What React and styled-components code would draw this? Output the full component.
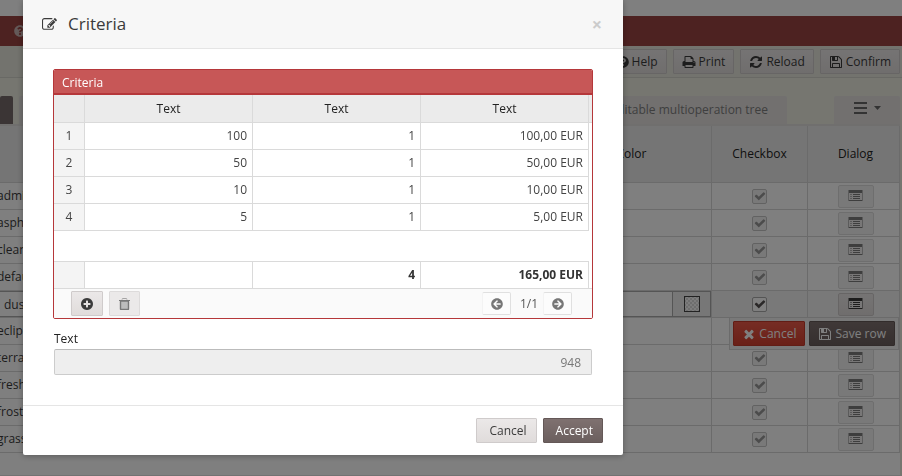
import { useState } from "react";
import styled, { createGlobalStyle, css } from "styled-components";
import { FaArrowCircleLeft, FaArrowCircleRight, FaQuestionCircle } from "react-icons/fa";

const GlobalStyle = createGlobalStyle`
  * {
    box-sizing: border-box;
  }

  body {
    margin: 0;
    background: #ffffff;
    color: #3b3b3b;
    font-family: "Open Sans", "Noto Sans", sans-serif;
    font-size: 12px;
    line-height: 18px;
  }

  button, input {
    font: inherit;
    color: inherit;
  }
`;

/* icons */

const paths = {
  check: "M1671 566q0 40-28 68l-724 724-136 136q-28 28-68 28t-68-28l-136-136-362-362q-28-28-28-68t28-68l136-136q28-28 68-28t68 28l294 295 656-657q28-28 68-28t68 28l136 136q28 28 28 68z",
  times: "M1490 1322q0 40-28 68l-136 136q-28 28-68 28t-68-28l-294-294-294 294q-28 28-68 28t-68-28l-136-136q-28-28-28-68t28-68l294-294-294-294q-28-28-28-68t28-68l136-136q28-28 68-28t68 28l294 294 294-294q28-28 68-28t68 28l136 136q28 28 28 68t-28 68l-294 294 294 294q28 28 28 68z",
  save: "M512 1536h768v-384h-768v384zm896 0h128v-896q0-14-10-38.5t-20-34.5l-281-281q-10-10-34-20t-39-10v416q0 40-28 68t-68 28h-576q-40 0-68-28t-28-68v-416h-128v1280h128v-416q0-40 28-68t68-28h832q40 0 68 28t28 68v416zm-384-928v-320q0-13-9.5-22.5t-22.5-9.5h-192q-13 0-22.5 9.5t-9.5 22.5v320q0 13 9.5 22.5t22.5 9.5h192q13 0 22.5-9.5t9.5-22.5zm640 32v928q0 40-28 68t-68 28h-1344q-40 0-68-28t-28-68v-1344q0-40 28-68t68-28h928q40 0 88 20t76 48l280 280q28 28 48 76t20 88z",
  edit: "M888 1184l116-116-152-152-116 116v56h96v96h56zm440-720q-16-16-33 1l-350 350q-17 17-1 33t33-1l350-350q17-17 1-33zm80 594v190q0 119-84.5 203.5t-203.5 84.5h-832q-119 0-203.5-84.5t-84.5-203.5v-832q0-119 84.5-203.5t203.5-84.5h832q63 0 117 25 15 7 18 23 3 17-9 29l-49 49q-14 14-32 8-23-6-45-6h-832q-66 0-113 47t-47 113v832q0 66 47 113t113 47h832q66 0 113-47t47-113v-126q0-13 9-22l64-64q15-15 35-7t20 29zm-96-738l288 288-672 672h-288v-288zm444 132l-92 92-288-288 92-92q28-28 68-28t68 28l152 152q28 28 28 68t-28 68z",
  plus: "M1344 960v-128q0-26-19-45t-45-19h-256v-256q0-26-19-45t-45-19h-128q-26 0-45 19t-19 45v256h-256q-26 0-45 19t-19 45v128q0 26 19 45t45 19h256v256q0 26 19 45t45 19h128q26 0 45-19t19-45v-256h256q26 0 45-19t19-45zm320-64q0 209-103 385.5t-279.5 279.5-385.5 103-385.5-103-279.5-279.5-103-385.5 103-385.5 279.5-279.5 385.5-103 385.5 103 279.5 279.5 103 385.5z",
  print: "M448 1536h896v-256h-896v256zm0-640h896v-384h-160q-40 0-68-28t-28-68v-160h-640v640zm1152 64q0-26-19-45t-45-19-45 19-19 45 19 45 45 19 45-19 19-45zm128 0v416q0 13-9.5 22.5t-22.5 9.5h-224v160q0 40-28 68t-68 28h-960q-40 0-68-28t-28-68v-160h-224q-13 0-22.5-9.5t-9.5-22.5v-416q0-79 56.5-135.5t135.5-56.5h64v-544q0-40 28-68t68-28h672q40 0 88 20t76 48l152 152q28 28 48 76t20 88v256h64q79 0 135.5 56.5t56.5 135.5z",
  reload: "M1639 1056q0 5-1 7-64 268-268 434.5t-478 166.5q-146 0-282.5-55t-243.5-157l-129 129q-19 19-45 19t-45-19-19-45v-448q0-26 19-45t45-19h448q26 0 45 19t19 45-19 45l-137 137q71 66 161 102t187 36q134 0 250-65t186-179q11-17 53-117 8-23 30-23h192q13 0 22.5 9.5t9.5 22.5zm25-800v448q0 26-19 45t-45 19h-448q-26 0-45-19t-19-45 19-45l138-138q-148-137-349-137-134 0-250 65t-186 179q-11 17-53 117-8 23-30 23h-199q-13 0-22.5-9.5t-9.5-22.5v-7q65-268 270-434.5t480-166.5q146 0 284 55.5t245 156.5l130-129q19-19 45-19t45 19 19 45z"
};

function Icon({ name, size = 14 }) {
  return (
    <svg width={size} height={size} viewBox="0 0 1792 1792" fill="currentColor" aria-hidden="true">
      <path d={paths[name]} />
    </svg>
  );
}

function ListIcon() {
  return (
    <svg width="15" height="11" viewBox="0 0 15 11" shapeRendering="crispEdges" aria-hidden="true">
      <rect x="0" y="0" width="15" height="11" fill="currentColor" opacity="0.5" />
      <rect x="1" y="3" width="13" height="7" fill="#f1efef" />
      <rect x="1" y="0" width="13" height="3" fill="currentColor" />
      <path d="M5 4.5h7M5 6.5h7M5 8.5h7M1 10.5h13" stroke="currentColor" />
      <path d="M2 4.5h2M2 6.5h2M2 8.5h2" stroke="currentColor" opacity="0.5" />
    </svg>
  );
}

function TrashIcon() {
  return (
    <svg width="11" height="12" viewBox="0 0 11 12" fill="none" stroke="currentColor" aria-hidden="true">
      <path d="M3 1.5Q3 .5 4 .5h3q1 0 1 1" opacity="0.6" />
      <path d="M0 2.5h11" />
      <rect x="1.5" y="3" width="8" height="8.5" rx="0.5" fill="#bcbcbc" strokeWidth="1.4" />
    </svg>
  );
}

function MenuIcon() {
  return (
    <svg width="27" height="12" viewBox="0 0 27 12" fill="currentColor" aria-hidden="true">
      <path d="M0 0h13v2H0zM0 5h13v2H0zM0 10h13v2H0zM20 4h7l-3.500 4z" />
    </svg>
  );
}

function SwatchIcon() {
  return (
    <svg width="16" height="16" viewBox="0 0 16 16" aria-hidden="true">
      <defs>
        <pattern id="checker" width="4" height="4" patternUnits="userSpaceOnUse">
          <rect width="4" height="4" fill="#fbfbfb" />
          <path d="M0 0h2v2H0zM2 2h2v2H2z" fill="#dcdcdc" />
        </pattern>
      </defs>
      <rect x="0.5" y="0.5" width="15" height="15" fill="url(#checker)" stroke="#444444" />
    </svg>
  );
}

/* buttons */

const buttonVariants = {
  default: css`
    background: linear-gradient(#ebe8e8, #e0dcdb);
    border-color: #cfcbcb;
    color: #3b3b3b;
  `,
  primary: css`
    background: linear-gradient(#7f7170, #6b5f5e);
    border-color: #645857;
    color: #ffffff;
  `,
  danger: css`
    background: linear-gradient(#ed5a49, #d4402f);
    border-color: #c43a2a;
    color: #ffffff;
  `
};

const Button = styled.button`
  display: inline-flex;
  align-items: center;
  justify-content: center;
  gap: 3px;
  height: 25px;
  padding: ${({ $wide }) => ($wide ? "0 9px 0 12px" : "0 8px")};
  border: 1px solid;
  border-radius: 1px;
  white-space: nowrap;
  ${({ $variant = "default" }) => buttonVariants[$variant]}
`;

const IconButton = styled(Button)`
  width: 32px;
  padding: 0;

  &:disabled {
    width: 31px;
    background: #ebe9e9;
    border-color: #dddbdb;
    color: #777777;
  }
`;

const DialogButton = styled(Button)`
  width: 36px;
  height: 23px;
  padding: 0 0 2px;
  border-radius: 2px;

  &:disabled {
    background: #f3f2f2;
    border-color: #dddddd;
    color: #7c7c7c;
  }
`;

const PagerButton = styled.button`
  display: flex;
  align-items: center;
  justify-content: center;
  width: 29px;
  height: 23px;
  padding: 0;
  border: 1px solid #e0e0e0;
  border-left-color: #f3f3f3;
  border-radius: 2px;
  background: #fcfcfc;
  color: #777777;
`;

/* page behind the dialog */

const TopStrip = styled.div`
  height: 16px;
`;

const BrandBar = styled.div`
  display: flex;
  align-items: center;
  height: 30px;
  padding-left: 14px;
  background: #9b4442;
  color: #c9b3b2;
`;

const Toolbar = styled.div`
  display: flex;
  justify-content: flex-end;
  gap: 6px;
  height: 32px;
  padding: 3px 2px 0;
  background: #e6e7dc;
  border-bottom: 1px solid #d2d3ca;
`;

const Content = styled.div`
  padding: 18px 2px 0 0;
  background: #ecede1;
`;

const TabBar = styled.div`
  display: flex;
  height: 30px;
  border-bottom: 2px solid #e0dfdc;
`;

const Tab = styled.button`
  height: 28px;
  padding: 0 19px;
  border: 0;
  border-radius: 2px 2px 0 0;
  background: ${({ $active }) => ($active ? "#776b6a" : "#e4e1df")};
  color: #7e7e7e;
`;

const ActiveTab = styled(Tab)`
  width: 13px;
  padding: 0;
  margin-right: 6px;
`;

const LastTab = styled(Tab)`
  flex: 1;
  margin-right: 47px;
  text-align: right;
`;

const MenuButton = styled(Tab)`
  width: 66px;
  color: #666666;
`;

const PageTable = styled.table`
  width: calc(100% + 3px);
  margin-left: -3px;
  table-layout: fixed;
  border-collapse: separate;
  border-spacing: 0;
  background: #ffffff;
`;

const PageTh = styled.th`
  width: ${({ $width }) => ($width ? `${$width}px` : "auto")};
  height: 57px;
  padding: 0;
  background: #ebebeb;
  border-right: 1px solid #d6d6d6;
  border-bottom: 1px solid #d6d6d6;
  font-weight: 500;
  color: #222222;

  &:last-child {
    padding-left: 4px;
  }
`;

const PageTr = styled.tr`
  background: ${({ $editing }) => ($editing ? "#f3f3f3" : "#ffffff")};
`;

const PageTd = styled.td`
  height: 27px;
  padding: 0;
  border-right: 1px solid #d6d6d6;
  border-bottom: 1px solid #d6d6d6;
  vertical-align: middle;

  &:last-child {
    padding-left: 4px;
  }
`;

const CenterCell = styled.div`
  display: flex;
  align-items: center;
  justify-content: center;
  height: 26px;
`;

const CellInput = styled.input`
  display: block;
  width: 100%;
  height: 26px;
  padding: 0 7px;
  border: 1px solid #aaaaaa;
  border-left: 0;
  background: #ffffff;
`;

const ColorCell = styled.div`
  display: flex;
`;

const SwatchButton = styled.button`
  flex: none;
  display: flex;
  align-items: center;
  justify-content: center;
  width: 38px;
  height: 26px;
  padding: 0;
  border: 1px solid #aaaaaa;
  border-left: 0;
  background: #eeeeee;
`;

const CheckWrap = styled.span`
  display: grid;
  place-items: center;
  width: 15px;
  height: 15px;
  color: ${({ $disabled }) => ($disabled ? "#999999" : "#555050")};

  > * {
    grid-area: 1 / 1;
  }

  svg {
    pointer-events: none;
  }
`;

const CheckInput = styled.input`
  appearance: none;
  width: 15px;
  height: 15px;
  margin: 0;
  border: 1px solid #aaaaaa;
  border-radius: 2px;
  background: #ffffff;

  &:disabled {
    border-color: #c4c4c4;
    background: #f3f3f3;
  }
`;

const EditRowAnchor = styled.div`
  position: relative;
`;

const RowActions = styled.div`
  position: absolute;
  top: 1px;
  right: 0;
  display: flex;
  gap: 4px;
  padding: 3px;
  background: #f3f3f3;
  border: 1px solid #d6d6d6;
  border-top: 0;
`;

const PageFooter = styled.div`
  height: 23px;
  background: #ffffff;
  border-bottom: 1px solid #e4e4e4;
`;

/* dialog */

const Backdrop = styled.div`
  position: fixed;
  inset: 0;
  padding: 0 23px;
  background: rgba(0, 0, 0, 0.5);
`;

const Modal = styled.section`
  max-width: 600px;
  background: #ffffff;
  border-radius: 0 0 2px 2px;
  box-shadow: 0 1px 6px rgba(0, 0, 0, 0.3);
`;

const ModalHeader = styled.header`
  display: flex;
  align-items: center;
  gap: 11px;
  height: 49px;
  padding: 0 21px 0 19px;
  background: #f7f7f7;
  border-bottom: 1px solid #e5e5e5;
`;

const ModalTitle = styled.h1`
  flex: 1;
  margin: 0;
  font-size: 17px;
  font-weight: 400;
`;

const CloseButton = styled.button`
  padding: 0;
  border: 0;
  background: none;
  color: #cccccc;
  font-size: 18px;
  font-weight: 700;
  line-height: 18px;
`;

const ModalBody = styled.div`
  padding: 20px 30px 30px;
`;

const ModalFooter = styled.footer`
  display: flex;
  justify-content: flex-end;
  gap: 6px;
  padding: 12px 20px;
  border-top: 1px solid #e5e5e5;
`;

const Panel = styled.div`
  border: 1px solid #b5373a;
  border-radius: 2px;
  overflow: hidden;
`;

const PanelTitle = styled.h2`
  height: 25px;
  margin: 0;
  padding: 4px 8px 0;
  background: #c75757;
  border-bottom: 2px solid #b5373a;
  color: #ffffff;
  font-size: 12px;
  font-weight: 500;
`;

const Grid = styled.table`
  width: 100%;
  table-layout: fixed;
  border-collapse: separate;
  border-spacing: 0;
`;

const Th = styled.th`
  width: ${({ $width }) => ($width ? `${$width}px` : "auto")};
  height: 28px;
  padding: 0;
  background: #ebebeb;
  border-right: ${({ $gutter }) => ($gutter ? "0" : "1px solid #dadada")};
  border-bottom: 1px solid #dadada;
  color: #222222;
  font-weight: 500;
`;

const Td = styled.td`
  height: 27px;
  padding: 0 5px;
  border-right: 1px solid #dadada;
  border-bottom: 1px solid #dadada;
  text-align: right;
  color: #444444;
`;

const RowNumber = styled(Td)`
  background: #f4f4f4;
  text-align: center;
`;

const TotalTd = styled(Td)`
  color: #333333;
  font-weight: 700;
`;

const FillTd = styled.td`
  height: 31px;
  padding: 0;
  border-bottom: 1px solid #dadada;
`;

const GutterTd = styled.td`
  padding: 0;
  border-bottom: ${({ $line }) => ($line ? "1px solid #dadada" : "0")};
`;

const PanelFooter = styled.div`
  display: flex;
  align-items: center;
  justify-content: space-between;
  height: 29px;
  padding: 0 20px 0 17px;
  background: #fafafa;
`;

const ButtonGroup = styled.div`
  display: flex;
  gap: 6px;
`;

const Pager = styled.div`
  display: flex;
  align-items: center;
`;

const PageCount = styled.span`
  width: 32px;
  padding-left: 4px;
  text-align: center;
  color: #555555;
`;

const Field = styled.div`
  margin: 11px 1px 0;
`;

const Label = styled.label`
  display: block;
  height: 19px;
  color: #222222;
  font-weight: 500;
`;

const TextInput = styled.input`
  display: block;
  width: 100%;
  height: 26px;
  padding: 0 10px;
  border: 1px solid #cccccc;
  border-top-color: #bbbbbb;
  border-radius: 2px;
  background: #eeeeee;
  color: #777777;
  text-align: right;
`;

const themes = ["admin", "asphalt", "clean", "default", "dust", "eclipse", "terra", "fresh", "frost", "grass"];

const rows = [
  ["100", "1", "100,00 EUR"],
  ["50", "1", "50,00 EUR"],
  ["10", "1", "10,00 EUR"],
  ["5", "1", "5,00 EUR"]
];

function Checkbox({ label, disabled }) {
  const [checked, setChecked] = useState(true);

  return (
    <CheckWrap $disabled={disabled}>
      <CheckInput
        type="checkbox"
        aria-label={label}
        checked={checked}
        disabled={disabled}
        onChange={(e) => setChecked(e.target.checked)}
      />
      {checked && <Icon name="check" size={12} />}
    </CheckWrap>
  );
}

function ThemeRow({ name, editing }) {
  return (
    <PageTr $editing={editing}>
      <PageTd>{editing ? <CellInput aria-label="Theme" defaultValue={name} /> : name}</PageTd>
      <PageTd>
        {editing && (
          <ColorCell>
            <CellInput aria-label="Color" />
            <SwatchButton type="button" aria-label="Pick color">
              <SwatchIcon />
            </SwatchButton>
          </ColorCell>
        )}
      </PageTd>
      <PageTd>
        <CenterCell>
          <Checkbox label={name} disabled={!editing} />
        </CenterCell>
      </PageTd>
      <PageTd>
        <CenterCell>
          <DialogButton type="button" disabled={!editing} aria-label={`Open ${name}`}>
            <ListIcon />
          </DialogButton>
        </CenterCell>
        {editing && (
          <EditRowAnchor>
            <RowActions>
              <Button type="button" $variant="danger">
                <Icon name="times" />
                Cancel
              </Button>
              <Button type="button" $variant="primary">
                <Icon name="save" />
                Save row
              </Button>
            </RowActions>
          </EditRowAnchor>
        )}
      </PageTd>
    </PageTr>
  );
}

function Page() {
  return (
    <main>
      <TopStrip />
      <BrandBar>
        <FaQuestionCircle size={12} />
      </BrandBar>
      <Toolbar>
        <Button type="button">
          <FaQuestionCircle size={12} />
          Help
        </Button>
        <Button type="button">
          <Icon name="print" />
          Print
        </Button>
        <Button type="button">
          <Icon name="reload" />
          Reload
        </Button>
        <Button type="button">
          <Icon name="save" />
          Confirm
        </Button>
      </Toolbar>
      <Content>
        <TabBar>
          <ActiveTab type="button" $active aria-label="Table" />
          <LastTab type="button">Editable multioperation tree</LastTab>
          <MenuButton type="button" aria-label="Menu">
            <MenuIcon />
          </MenuButton>
        </TabBar>
        <PageTable>
          <thead>
            <tr>
              <PageTh />
              <PageTh $width={160}>Color</PageTh>
              <PageTh $width={96}>Checkbox</PageTh>
              <PageTh $width={92}>Dialog</PageTh>
            </tr>
          </thead>
          <tbody>
            {themes.map((name) => (
              <ThemeRow key={name} name={name} editing={name === "dust"} />
            ))}
          </tbody>
        </PageTable>
        <PageFooter />
      </Content>
    </main>
  );
}

function CriteriaGrid() {
  return (
    <Panel>
      <PanelTitle>Criteria</PanelTitle>
      <Grid>
        <thead>
          <tr>
            <Th $width={31} />
            <Th>Text</Th>
            <Th>Text</Th>
            <Th>Text</Th>
            <Th $width={3} $gutter />
          </tr>
        </thead>
        <tbody>
          {rows.map((row, index) => (
            <tr key={row[0]}>
              <RowNumber>{index + 1}</RowNumber>
              {row.map((value, column) => (
                <Td key={column}>{value}</Td>
              ))}
              <GutterTd />
            </tr>
          ))}
          <tr>
            <FillTd colSpan={4} />
            <GutterTd />
          </tr>
        </tbody>
        <tfoot>
          <tr>
            <RowNumber />
            <TotalTd />
            <TotalTd>4</TotalTd>
            <TotalTd>165,00 EUR</TotalTd>
            <GutterTd $line />
          </tr>
        </tfoot>
      </Grid>
      <PanelFooter>
        <ButtonGroup>
          <IconButton type="button" aria-label="Add">
            <Icon name="plus" />
          </IconButton>
          <IconButton type="button" aria-label="Delete" disabled>
            <TrashIcon />
          </IconButton>
        </ButtonGroup>
        <Pager>
          <PagerButton type="button" aria-label="Previous page">
            <FaArrowCircleLeft size={12} />
          </PagerButton>
          <PageCount>1/1</PageCount>
          <PagerButton type="button" aria-label="Next page">
            <FaArrowCircleRight size={12} />
          </PagerButton>
        </Pager>
      </PanelFooter>
    </Panel>
  );
}

function App() {
  return (
    <>
      <GlobalStyle />
      <Page />
      <Backdrop>
        <Modal role="dialog" aria-labelledby="dialog-title">
          <ModalHeader>
            <Icon name="edit" size={15} />
            <ModalTitle id="dialog-title">Criteria</ModalTitle>
            <CloseButton type="button" aria-label="Close">×</CloseButton>
          </ModalHeader>
          <ModalBody>
            <CriteriaGrid />
            <Field>
              <Label htmlFor="total">Text</Label>
              <TextInput id="total" value="948" readOnly />
            </Field>
          </ModalBody>
          <ModalFooter>
            <Button type="button" $wide>Cancel</Button>
            <Button type="button" $variant="primary" $wide>Accept</Button>
          </ModalFooter>
        </Modal>
      </Backdrop>
    </>
  );
}

export default App;
